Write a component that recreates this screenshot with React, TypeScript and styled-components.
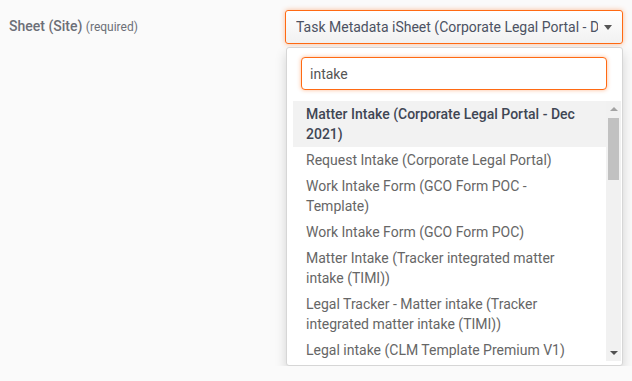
import * as React from 'react';
import styled, { createGlobalStyle } from 'styled-components';

const ORANGE = '#ff6a13';

const GlobalStyle = createGlobalStyle`
    html, body {
        margin: 0;
        padding: 0;
        background: #fafafa;
        font-family: Roboto, 'Liberation Sans', sans-serif;
    }
`;

const FormRow = styled.div`
    display: grid;
    grid-template-columns: 276px 338px;
    align-items: start;
    padding: 10px 0 0 9px;
`;

const Label = styled.div`
    padding-top: 6px;
    color: #6c6f77;
    font-size: 14px;
    font-weight: 500;
    line-height: 20px;
`;

const Hint = styled.span`
    font-size: 12px;
    font-weight: 400;
`;

const Field = styled.div`
    display: flex;
    flex-direction: column;
`;

const Toggle = styled.button`
    display: flex;
    align-items: center;
    width: 338px;
    height: 34px;
    padding: 0 10px;
    border: 1px solid ${ORANGE};
    border-radius: 3px;
    background: linear-gradient(to bottom, #ffffff 0%, #f1f1f1 100%);
    box-shadow: 0 0 5px rgba(255, 106, 19, 0.45);
    color: #4c5262;
    font-family: inherit;
    font-size: 14px;
    text-align: left;
    cursor: pointer;
`;

const ToggleText = styled.span`
    flex: 1;
    overflow: hidden;
    white-space: nowrap;
`;

const Caret = styled.span`
    margin-left: 6px;
    border-top: 5px solid #555;
    border-left: 4px solid transparent;
    border-right: 4px solid transparent;
`;

const Menu = styled.div`
    width: 337px;
    box-sizing: border-box;
    margin: 3px 0 0 1px;
    border: 1px solid #d6d6d6;
    border-radius: 3px;
    background: #fff;
    box-shadow: 0 6px 12px rgba(0, 0, 0, 0.16);
    padding: 9px 0 4px 6px;
`;

const SearchBox = styled.input`
    display: block;
    box-sizing: border-box;
    width: 306px;
    height: 33px;
    margin: 0 0 11px 8px;
    padding: 0 8px;
    border: 1px solid ${ORANGE};
    border-radius: 4px;
    box-shadow: 0 0 4px rgba(255, 106, 19, 0.45);
    outline: none;
    color: #555;
    font-family: inherit;
    font-size: 14px;
`;

const Results = styled.div`
    display: flex;
    height: 260px;
`;

const ResultList = styled.ul`
    flex: 1;
    margin: 0;
    padding: 0;
    list-style: none;
    overflow: hidden;
`;

const ResultItem = styled.li<{ $active?: boolean }>`
    padding: 3px 14px 3px 13px;
    background: ${(p) => (p.$active ? '#f2f2f2' : 'transparent')};
    color: ${(p) => (p.$active ? '#3f4654' : '#666')};
    font-size: 14px;
    font-weight: ${(p) => (p.$active ? 500 : 400)};
    line-height: 20px;
`;

const ScrollTrack = styled.div`
    display: flex;
    flex-direction: column;
    width: 15px;
    margin-right: 1px;
    background: #f1f1f1;
`;

const ScrollButton = styled.div`
    display: flex;
    align-items: center;
    justify-content: center;
    height: 16px;
`;

const ArrowUp = styled.span`
    border-left: 4px solid transparent;
    border-right: 4px solid transparent;
    border-bottom: 4px solid #a3a3a3;
`;

const ArrowDown = styled.span`
    border-left: 4px solid transparent;
    border-right: 4px solid transparent;
    border-top: 4px solid #505050;
`;

const ScrollThumb = styled.div`
    height: 62px;
    margin: 1px 2px 0;
    background: #c1c1c1;
`;

const Spacer = styled.div`
    flex: 1;
`;

const results = [
    'Matter Intake (Corporate Legal Portal - Dec 2021)',
    'Request Intake (Corporate Legal Portal)',
    'Work Intake Form (GCO Form POC - Template)',
    'Work Intake Form (GCO Form POC)',
    'Matter Intake (Tracker integrated matter intake (TIMI))',
    'Legal Tracker - Matter intake (Tracker integrated matter intake (TIMI))',
    'Legal intake (CLM Template Premium V1)',
];

export default function App() {
    return (
        <>
            <GlobalStyle />
            <FormRow>
                <Label>
                    Sheet (Site) <Hint>(required)</Hint>
                </Label>
                <Field>
                    <Toggle type="button">
                        <ToggleText>Task Metadata iSheet (Corporate Legal Portal - Dec 2021)</ToggleText>
                        <Caret />
                    </Toggle>
                    <Menu>
                        <SearchBox defaultValue="intake" />
                        <Results>
                            <ResultList>
                                {results.map((r, i) => (
                                    <ResultItem key={r} $active={i === 0}>
                                        {r}
                                    </ResultItem>
                                ))}
                            </ResultList>
                            <ScrollTrack>
                                <ScrollButton>
                                    <ArrowUp />
                                </ScrollButton>
                                <ScrollThumb />
                                <Spacer />
                                <ScrollButton>
                                    <ArrowDown />
                                </ScrollButton>
                            </ScrollTrack>
                        </Results>
                    </Menu>
                </Field>
            </FormRow>
        </>
    );
}
